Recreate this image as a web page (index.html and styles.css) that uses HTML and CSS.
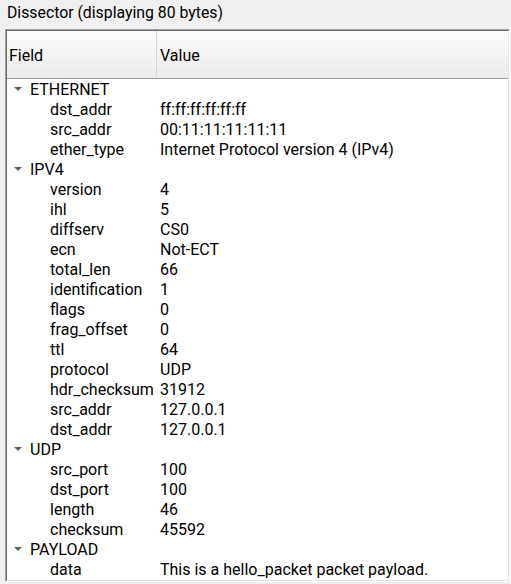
FILE: index.html
```html
<!DOCTYPE html>
<html>
<head>
<meta charset="utf-8">
<link rel="stylesheet" href="styles.css">
</head>
<body>
<div class="title">Dissector (displaying 80 bytes)</div>
<div class="frame">
  <div class="frame-inner">
    <div class="header">
      <div class="hcell hfield">Field</div>
      <div class="hcell hvalue">Value</div>
    </div>
    <div class="rows">
      <div class="row section"><span class="arrow"></span><span class="name">ETHERNET</span></div>
      <div class="row child"><span class="name">dst_addr</span><span class="val">ff:ff:ff:ff:ff:ff</span></div>
      <div class="row child"><span class="name">src_addr</span><span class="val">00:11:11:11:11:11</span></div>
      <div class="row child"><span class="name">ether_type</span><span class="val">Internet Protocol version 4 (IPv4)</span></div>
      <div class="row section"><span class="arrow"></span><span class="name">IPV4</span></div>
      <div class="row child"><span class="name">version</span><span class="val">4</span></div>
      <div class="row child"><span class="name">ihl</span><span class="val">5</span></div>
      <div class="row child"><span class="name">diffserv</span><span class="val">CS0</span></div>
      <div class="row child"><span class="name">ecn</span><span class="val">Not-ECT</span></div>
      <div class="row child"><span class="name">total_len</span><span class="val">66</span></div>
      <div class="row child"><span class="name">identification</span><span class="val">1</span></div>
      <div class="row child"><span class="name">flags</span><span class="val">0</span></div>
      <div class="row child"><span class="name">frag_offset</span><span class="val">0</span></div>
      <div class="row child"><span class="name">ttl</span><span class="val">64</span></div>
      <div class="row child"><span class="name">protocol</span><span class="val">UDP</span></div>
      <div class="row child"><span class="name">hdr_checksum</span><span class="val">31912</span></div>
      <div class="row child"><span class="name">src_addr</span><span class="val">127.0.0.1</span></div>
      <div class="row child"><span class="name">dst_addr</span><span class="val">127.0.0.1</span></div>
      <div class="row section"><span class="arrow"></span><span class="name">UDP</span></div>
      <div class="row child"><span class="name">src_port</span><span class="val">100</span></div>
      <div class="row child"><span class="name">dst_port</span><span class="val">100</span></div>
      <div class="row child"><span class="name">length</span><span class="val">46</span></div>
      <div class="row child"><span class="name">checksum</span><span class="val">45592</span></div>
      <div class="row section"><span class="arrow"></span><span class="name">PAYLOAD</span></div>
      <div class="row child"><span class="name">data</span><span class="val">This is a hello_packet packet payload.</span></div>
    </div>
  </div>
</div>
</body>
</html>
```

FILE: styles.css
```css
html, body {
  margin: 0;
  padding: 0;
  background: #f0f0f0;
}

body {
  font-family: Roboto, "Noto Sans", sans-serif;
  font-size: 16px;
  color: #000;
  width: 511px;
  height: 584px;
  overflow: hidden;
}

.title {
  height: 29px;
  line-height: 26px;
  padding-left: 7px;
  font-size: 15.8px;
  color: #000;
}

/* sunken frame around the tree view */
.frame {
  margin-left: 5px;
  width: 505px;
  height: 553px;
  box-sizing: border-box;
  border: 1px solid;
  border-color: #a0a0a0 #ffffff #ffffff #a0a0a0;
}

.frame-inner {
  height: 100%;
  box-sizing: border-box;
  border: 1px solid;
  border-color: #696969 #e3e3e3 #e3e3e3 #696969;
  background: #fff;
  overflow: hidden;
}

.header {
  display: grid;
  grid-template-columns: 150px 1fr;
  height: 48px;
  box-sizing: border-box;
  background: linear-gradient(#fcfcfc, #ebebeb);
  border-bottom: 1px solid #a0a0a0;
}

.hcell {
  display: flex;
  align-items: center;
  padding-top: 2px;
}

.hfield {
  padding-left: 2px;
  border-right: 1px solid #d5d5d5;
}

.hvalue {
  padding-left: 3px;
}

.rows {
  display: flex;
  flex-direction: column;
}

.row {
  display: flex;
  align-items: center;
  height: 20px;
  flex: none;
  white-space: nowrap;
}

/* expanded-branch marker */
.section .arrow {
  width: 0;
  height: 0;
  margin-left: 7px;
  margin-right: 8px;
  margin-top: -1px;
  border-left: 4px solid transparent;
  border-right: 4px solid transparent;
  border-top: 4px solid #606060;
}

.child .name {
  width: 110px;
  padding-left: 43px;
}
```
